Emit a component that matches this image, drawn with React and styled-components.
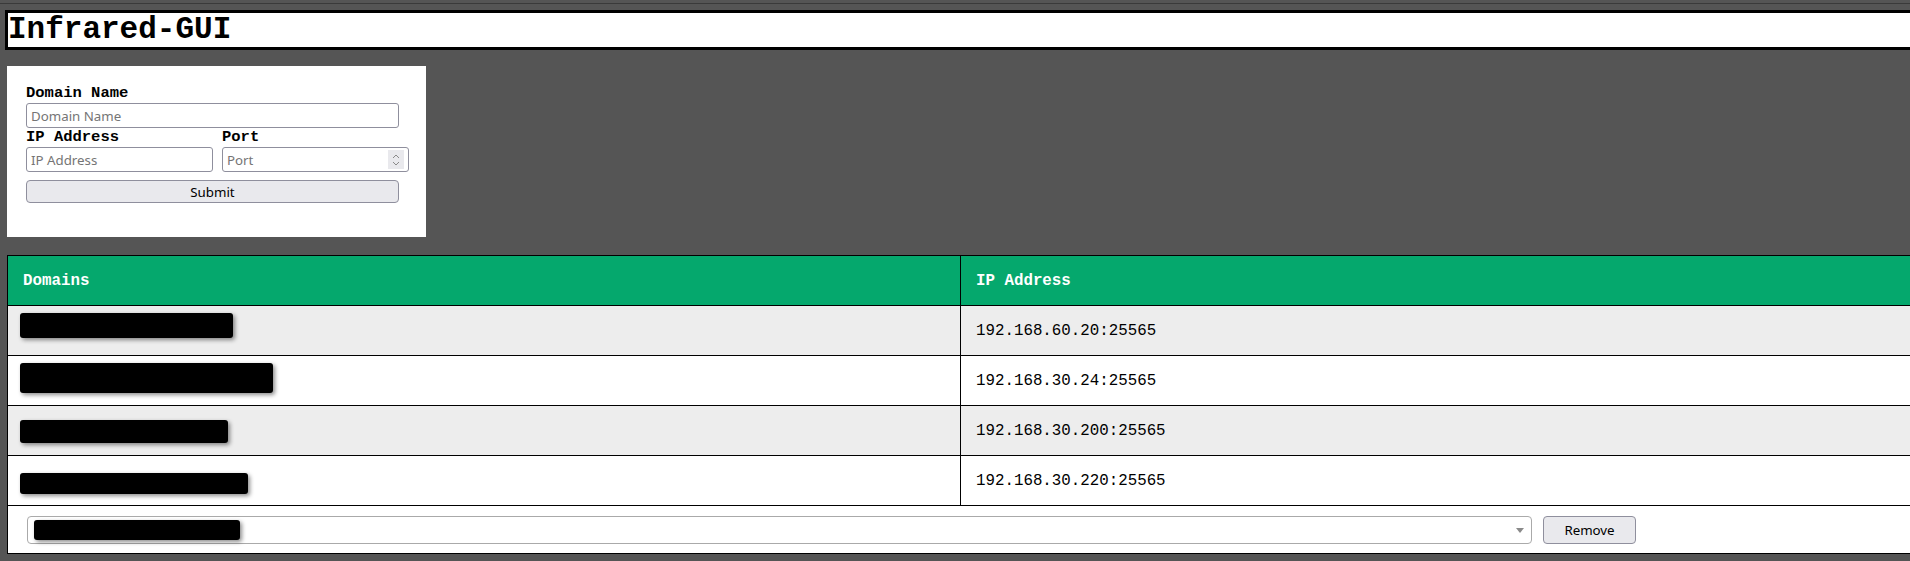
import React from 'react'
import styled, { createGlobalStyle } from 'styled-components'

const GlobalStyle = createGlobalStyle`
  html, body {
    margin: 0;
    padding: 0;
    background: #555555;
    overflow: hidden;
  }
  * {
    box-sizing: border-box;
  }
`

const rows = [
  { ip: '192.168.60.20:25565', w: 213, h: 25, dy: -5 },
  { ip: '192.168.30.24:25565', w: 253, h: 30, dy: -3 },
  { ip: '192.168.30.200:25565', w: 208, h: 23, dy: 1 },
  { ip: '192.168.30.220:25565', w: 228, h: 21, dy: 3 },
]

const App = () => {
  return (
    <>
      <GlobalStyle />
      <Page>
        <TopRule />
        <Header>
          <h1>Infrared-GUI</h1>
        </Header>
        <FormCard>
          <Label wide>Domain Name</Label>
          <Input wide placeholder='Domain Name' />
          <Label>IP Address</Label>
          <Label>Port</Label>
          <Input placeholder='IP Address' />
          <NumberWrap>
            <Input placeholder='Port' />
            <Spinner>
              <svg width='10' height='14' viewBox='0 0 10 14'>
                <path
                  d='M2 5 L5 2 L8 5 M2 9 L5 12 L8 9'
                  fill='none'
                  stroke='#8a8a8a'
                  strokeWidth='1'
                />
              </svg>
            </Spinner>
          </NumberWrap>
          <Button wide>Submit</Button>
        </FormCard>
        <Table>
          <thead>
            <tr>
              <HeadCell className='domain'>Domains</HeadCell>
              <HeadCell>IP Address</HeadCell>
            </tr>
          </thead>
          <tbody>
            {rows.map((r, i) => (
              <Row key={i} odd={i % 2 === 0}>
                <Cell>
                  <Redacted w={r.w} h={r.h} dy={r.dy} />
                </Cell>
                <Cell>{r.ip}</Cell>
              </Row>
            ))}
            <Row>
              <FootCell colSpan={2}>
                <RemoveBar>
                  <Select>
                    <Redacted w={206} h={20} dy={0} inSelect />
                    <Arrow />
                  </Select>
                  <Button remove>Remove</Button>
                </RemoveBar>
              </FootCell>
            </Row>
          </tbody>
        </Table>
      </Page>
    </>
  )
}

const Page = styled.div`
  width: 1910px;
  height: 561px;
  overflow: hidden;
  padding-top: 3px;
`

const TopRule = styled.div`
  height: 1px;
  background: #3a3a3a;
  margin-bottom: 6px;
`

const Header = styled.div`
  margin-left: 5px;
  width: 1960px;
  height: 40px;
  background: #fff;
  border: 3px solid #000;
  h1 {
    margin: 0;
    font-family: 'Liberation Mono', monospace;
    font-weight: 700;
    font-size: 31px;
    line-height: 34px;
    color: #000;
  }
`

const FormCard = styled.div`
  margin: 16px 0 0 7px;
  width: 419px;
  height: 171px;
  background: #fff;
  padding: 18px 0 0 19px;
  display: grid;
  grid-template-columns: 187px 187px;
  column-gap: 9px;
  align-content: start;
`

const Label = styled.label`
  grid-column: ${(p) => (p.wide ? '1 / span 2' : 'auto')};
  font-family: 'Liberation Mono', monospace;
  font-weight: 700;
  font-size: 15.5px;
  line-height: 19px;
  color: #000;
`

const Input = styled.input`
  grid-column: ${(p) => (p.wide ? '1 / span 2' : 'auto')};
  width: ${(p) => (p.wide ? '373px' : '187px')};
  height: 25px;
  border: 1px solid #8f8f9d;
  border-radius: 3px;
  padding: 0 4px;
  font-family: 'Noto Sans', sans-serif;
  font-size: 13.3px;
  background: #fff;
  outline: none;
  &::placeholder {
    color: #757575;
  }
`

const NumberWrap = styled.div`
  position: relative;
  width: 187px;
  height: 25px;
`

const Spinner = styled.span`
  position: absolute;
  right: 5px;
  top: 3px;
  width: 16px;
  height: 19px;
  background: #e9e9ed;
  display: flex;
  align-items: center;
  justify-content: center;
`

const Button = styled.button`
  grid-column: ${(p) => (p.wide ? '1 / span 2' : 'auto')};
  width: ${(p) => (p.remove ? '93px' : '373px')};
  height: ${(p) => (p.remove ? '28px' : '23px')};
  margin-top: ${(p) => (p.remove ? '0' : '8px')};
  background: #e9e9ed;
  border: 1px solid #8f8f9d;
  border-radius: 4px;
  font-family: 'Noto Sans', sans-serif;
  font-size: 13.3px;
  color: #000;
  padding: 0;
  flex-shrink: 0;
`

const Table = styled.table`
  margin: 18px 0 0 7px;
  width: 1980px;
  border-collapse: collapse;
  border: 1px solid #000;
  font-family: 'Liberation Mono', monospace;
  font-size: 15.8px;
  color: #000;
`

const HeadCell = styled.th`
  background: #05a86d;
  color: #fff;
  font-weight: 700;
  text-align: left;
  height: 50px;
  padding: 0 0 0 15px;
  border: 1px solid #000;
  &.domain {
    width: 953px;
  }
`

const Row = styled.tr`
  background: ${(p) => (p.odd ? '#ededed' : '#fff')};
`

const Cell = styled.td`
  height: 50px;
  padding: 0 0 0 15px;
  border: 1px solid #000;
  vertical-align: middle;
`

const FootCell = styled.td`
  height: 48px;
  padding: 0 0 0 19px;
  border: 1px solid #000;
`

const RemoveBar = styled.div`
  display: flex;
  align-items: center;
  gap: 11px;
`

const Select = styled.div`
  position: relative;
  width: 1505px;
  height: 28px;
  border: 1px solid #aaaaaa;
  border-radius: 4px;
  background: #fff;
  display: flex;
  align-items: center;
  padding-left: 6px;
`

const Arrow = styled.span`
  position: absolute;
  right: 7px;
  top: 11px;
  width: 0;
  height: 0;
  border-left: 4px solid transparent;
  border-right: 4px solid transparent;
  border-top: 5px solid #8a8a8a;
`

const Redacted = styled.span`
  display: block;
  width: ${(p) => p.w}px;
  height: ${(p) => p.h}px;
  margin-left: ${(p) => (p.inSelect ? '0' : '-3px')};
  transform: translateY(${(p) => p.dy}px);
  background: #000;
  border-radius: 3px;
  box-shadow: 2px 2px 4px rgba(0, 0, 0, 0.45);
`

export default App
